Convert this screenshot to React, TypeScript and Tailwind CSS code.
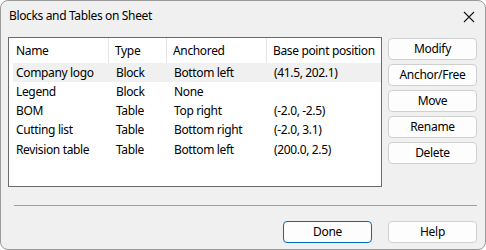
import React from "react";

const rows = [
  ["Company logo", "Block", "Bottom left", "(41.5, 202.1)"],
  ["Legend", "Block", "None", ""],
  ["BOM", "Table", "Top right", "(-2.0, -2.5)"],
  ["Cutting list", "Table", "Bottom right", "(-2.0, 3.1)"],
  ["Revision table", "Table", "Bottom left", "(200.0, 2.5)"],
];

function Btn({ label, primary }: { label: string; primary?: boolean }) {
  return (
    <button
      className={
        "w-[89px] h-[22px] rounded-[4px] bg-[#fdfdfd] text-[12px] tracking-[-0.3px] text-black flex items-center justify-center leading-none " +
        (primary ? "border border-[#0067c0]" : "border border-[#d0d0d0]")
      }
    >
      {label}
    </button>
  );
}

export default function App() {
  return (
    <div
      className="w-[486px] h-[250px] bg-[#f0f0f0] border border-[#9a9a9a] rounded-[8px] overflow-hidden flex flex-col text-black tracking-[-0.35px]"
      style={{ fontFamily: '"Noto Sans", "Open Sans", sans-serif' }}
    >
      <div className="h-[30px] flex items-center justify-between pl-[8px] pr-[10px] shrink-0">
        <span className="text-[12px]">Blocks and Tables on Sheet</span>
        <svg width="12" height="12" viewBox="0 0 12 12" className="mt-[1px]">
          <path d="M1 1 L11 11 M11 1 L1 11" stroke="#1a1a1a" strokeWidth="1.1" />
        </svg>
      </div>
      <div className="flex pl-[7px] pt-[6px] gap-[6px]">
        <div className="w-[374px] h-[150px] bg-white border border-[#6b6b6b] pl-[4px] pt-0 text-[12px] whitespace-nowrap">
          <div className="flex h-[25px] items-center">
            <div className="w-[96px] pl-[3px] h-full flex items-center border-r border-[#e5e5e5]">Name</div>
            <div className="w-[58px] pl-[6px] h-full flex items-center border-r border-[#e5e5e5]">Type</div>
            <div className="w-[100px] pl-[6px] h-full flex items-center border-r border-[#e5e5e5]">Anchored</div>
            <div className="pl-[6px] h-full flex items-center">Base point position</div>
          </div>
          {rows.map((r, i) => (
            <div
              key={i}
              className={"flex h-[19.25px] items-center " + (i === 0 ? "bg-[#f0f0f0]" : "")}
            >
              <div className="w-[96px] pl-[3px]">{r[0]}</div>
              <div className="w-[58px] pl-[7px]">{r[1]}</div>
              <div className="w-[100px] pl-[7px]">{r[2]}</div>
              <div className="pl-[7px]">{r[3]}</div>
            </div>
          ))}
        </div>
        <div className="flex flex-col gap-[4px] pt-[1px]">
          <Btn label="Modify" />
          <Btn label="Anchor/Free" />
          <Btn label="Move" />
          <Btn label="Rename" />
          <Btn label="Delete" />
        </div>
      </div>
      <div className="ml-[13px] mr-[8px] mt-[18px] h-[1px] bg-[#a0a0a0]" />
      <div className="flex justify-end gap-[16px] pr-[8px] mt-[15px]">
        <Btn label="Done" primary />
        <Btn label="Help" />
      </div>
    </div>
  );
}
